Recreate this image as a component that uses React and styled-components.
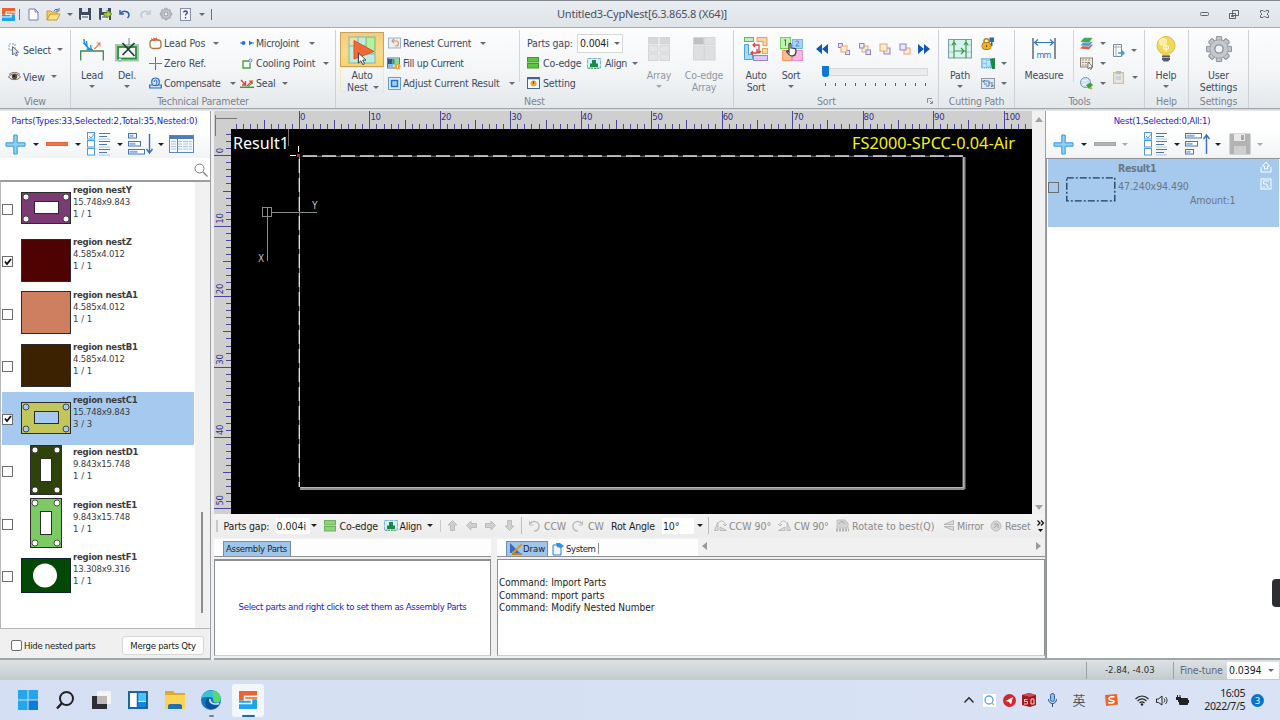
import React from 'react';
import styled, { createGlobalStyle, css } from 'styled-components';

const Global = createGlobalStyle`
  html, body { margin: 0; padding: 0; overflow: hidden; }
  body { font-family: 'DejaVu Sans Condensed', 'DejaVu Sans', 'Noto Sans CJK SC', sans-serif; font-stretch: condensed; font-size: 10.5px; color: #3f4a5e; }
  * { box-sizing: border-box; }
  svg { display: block; flex: none; overflow: visible; }
`;

const Window = styled.div`
  width: 1280px; height: 720px; display: flex; flex-direction: column; background: #f0f0f0; overflow: hidden;
`;

const Label = styled.span`
  display: block; flex: none; white-space: nowrap; line-height: 12px;
  width: ${p => (p.$w ? p.$w + 'px' : 'auto')};
  margin-left: ${p => p.$ml || 0}px;
  letter-spacing: ${p => (p.$ls === undefined ? -0.17 : p.$ls)}px;
  font-size: ${p => p.$size || 10.5}px;
  text-align: ${p => p.$align || 'left'};
  color: ${p => p.$color || 'inherit'};
  font-weight: ${p => (p.$bold ? 'bold' : 'normal')};
`;

const Cell = styled.div`
  flex: none; width: ${p => p.$w}px; height: 100%; margin-left: ${p => p.$ml || 0}px;
  display: flex; align-items: center; justify-content: center;
`;

const CaretShape = styled.i`
  flex: none; display: block; width: 0; height: 0; margin-left: ${p => p.$ml || 0}px;
  border: 3px solid transparent; border-top: 3px solid ${p => p.$c || '#666c75'}; border-bottom: 0;
`;

const Rule = styled.div`
  flex: none; width: 1px; height: ${p => p.$h}px; margin-left: ${p => p.$ml || 0}px; background: ${p => p.$c || '#b9bec4'};
`;

const Svg = ({ w, h, vb, children }) => (
  <svg width={w} height={h || w} viewBox={vb || `0 0 ${w} ${h || w}`} fill="none">{children}</svg>
);

/* ---------- icons ---------- */

const Logo = ({ s = 13 }) => (
  <Svg w={s} vb="0 0 18 18">
    <path d="M0 0h18v6H6v3.500h-6z" fill="#f0622a" />
    <path d="M6 6h12v3H6z" fill="#f08a5c" />
    <path d="M0 9.500h6V9h12v9H0z" fill="#1ea4ea" />
    <path d="M18 5.300H5.500V9h7v3.500H0" stroke="#fbfbfb" strokeWidth="1.500" />
  </Svg>
);
const NewFile = () => <Svg w={11} h={13}><path d="M1 1h6l3 3v8H1z" fill="#fff" stroke="#7c7bbd" /><path d="M7 1v3h3" stroke="#7c7bbd" /></Svg>;
const OpenFile = () => (
  <Svg w={15} h={13}>
    <path d="M1 12V3h4l1 1h5v2" fill="#f6cf62" stroke="#c59a2c" /><path d="M1 12l3-6h10l-3 6z" fill="#fbe08a" stroke="#c59a2c" />
    <path d="M8 3c1-2 3-2 4-1m1-2v3h-3" stroke="#3b6fb5" />
  </Svg>
);
const Floppy = ({ arrow }) => (
  <Svg w={12}>
    <path d="M0 0h12v12H1l-1-1z" fill="#414b60" /><path d="M3 0h6v4H3z" fill="#dfe4ec" /><path d="M2 7h8v5H2z" fill="#eef1f5" /><path d="M3 9h6" stroke="#414b60" />
    {arrow && <path d="M5 5h3V2l5 4-5 4V8H5z" fill="#a9d324" stroke="#62821a" strokeWidth=".7" />}
  </Svg>
);
const Undo = ({ c = '#2f5da8', flip }) => (
  <Svg w={12} h={10}><g transform={flip ? 'translate(12 0) scale(-1 1)' : ''}><path d="M1 1v4h4" stroke={c} strokeWidth="1.500" /><path d="M1.500 4.500C4 1 10 2 10 6c0 1-.5 2-1.500 3" stroke={c} strokeWidth="1.500" /></g></Svg>
);
const Gear = ({ s = 12, c = '#70757d', fill = '#c9ccd1' }) => (
  <Svg w={s} vb="0 0 24 24">
    <g fill={fill} stroke={c} strokeWidth="1">
      {[0, 45, 90, 135].map(a => <rect key={a} x="9.500" y="0.500" width="5" height="23" rx="1" transform={`rotate(${a} 12 12)`} />)}
    </g>
    <circle cx="12" cy="12" r="8.500" fill={fill} stroke={c} strokeWidth=".6" />
    <circle cx="12" cy="12" r="3.800" fill="#f3f4f6" stroke={c} strokeWidth="1.300" />
  </Svg>
);
const HelpBox = () => <Svg w={11} h={13}><rect x=".5" y=".5" width="10" height="12" fill="#f4f6fb" stroke="#8490ac" /><path d="M3.700 4.500c0-2 3.600-2 3.600 0 0 1.300-1.800 1.300-1.800 3M5.500 9v1.400" stroke="#2e4a85" strokeWidth="1.300" /></Svg>;

const SelectIco = () => <Svg w={12} h={14}><path d="M1 1h6v6H1z" stroke="#9aa3b0" strokeDasharray="2 1" /><path d="M4.500 3.500v8.500l2-2 1.500 3 1.500-.8L8.100 9.300h2.700z" fill="#dfe4ea" stroke="#5c6675" strokeWidth=".9" /></Svg>;
const Eye = () => <Svg w={13} h={9}><path d="M.5 5C3 1 10 1 12.500 5 10 8.500 3 8.500.5 5z" fill="#efe9e0" stroke="#6f6660" /><circle cx="6.500" cy="4.500" r="2.700" fill="#5b4a3e" /><circle cx="6" cy="4" r="1" fill="#1d1715" /><path d="M1 2.500C4-.3 9-.3 12 2.500" stroke="#7d756e" /></Svg>;
const LeadIco = () => (
  <Svg w={24} h={24}>
    <path d="M.7 23.500V14h22.600v9.500" stroke="#3b8c4a" strokeWidth="1.300" /><path d="M4 2c0 5 3 10 9 11" stroke="#1f8fd6" strokeWidth="1.500" /><path d="M3 6l4 2.500L6.500 4M6.500 12l5 1-1-5" stroke="#1f8fd6" strokeWidth="1.300" />
    <path d="M14 12c2-1 3-3 6-6m-3.500 0H20v3.500" stroke="#e5806c" strokeWidth="1.200" />
  </Svg>
);
const DelIco = () => (
  <Svg w={24} h={25}><rect x="1.500" y="8.500" width="21" height="14.500" stroke="#a9c9ae" strokeWidth="3" fill="#f2faf3" /><rect x="3" y="10" width="18" height="11.500" stroke="#2b8d3c" strokeWidth="1.800" /><path d="M14 1v7" stroke="#7e8690" /><path d="M7.500 6l12 13M19.500 6L7.500 18" stroke="#31373f" strokeWidth="1.700" /><circle cx="5" cy="22.500" r="1.500" fill="#fff" stroke="#5a9" /></Svg>
);
const LeadPos = () => <Svg w={13} h={12}><rect x="1" y="3" width="11" height="8.500" rx="3" stroke="#b07a36" strokeWidth="1.300" /><path d="M2 1.500l4 2.500M8 1L4.500 3.500M4 1l5 2" stroke="#e0524a" /></Svg>;
const ZeroRef = () => <Svg w={13}><path d="M6.500 0v4m0 5v4" stroke="#5f55c8" /><path d="M0 6.500h4m5 0h4" stroke="#8f5cc0" /><path d="M6.500 4v5M4 6.500h5" stroke="#e0524a" /></Svg>;
const Compensate = () => <Svg w={13} h={12}><path d="M.7 11V8h3C2 6 2 1 6.500 1s4.500 5 2.800 7h3v3z" fill="#cfe1f6" stroke="#2b6bc0" strokeWidth="1.200" /><path d="M4 8.500h5M5 5a1.500 2 0 013 0c0 1-1 2-1 3" stroke="#2b6bc0" /></Svg>;
const Micro = () => <Svg w={14} h={6}><path d="M0 3h5m4 0h5" stroke="#2f6fd0" strokeWidth="1.200" /><circle cx="3.500" cy="3" r="2" fill="#2f6fd0" /><path d="M9 .4l3.500 2.600L9 5.600z" fill="#2f6fd0" /></Svg>;
const Cooling = () => <Svg w={11} h={11}><path d="M7 3H1v7h7V5" stroke="#52a043" strokeWidth="1.400" /><circle cx="8.500" cy="2.500" r="1.500" stroke="#3f87cf" /></Svg>;
const SealIco = () => <Svg w={14} h={9}><path d="M0 8.300h14" stroke="#3f9a3b" strokeWidth="1.500" /><path d="M1 1l4.500 5V2M5.500 6H2" stroke="#d5483f" strokeWidth="1.400" /><path d="M7 7l5-5H9m3 0v3" stroke="#d5483f" strokeWidth="1.200" /><path d="M8 7.500l5-4" stroke="#3f9a3b" /></Svg>;
const Pointer = () => <path d="M10.500 17v10l2.400-2.200 1.800 3.800 1.800-.8-1.800-3.700H18z" fill="#fff" stroke="#222" strokeWidth=".8" />;
const AutoNest = () => (
  <Svg w={28} h={28}><rect x="1" y="1" width="26" height="26" fill="#c2ecdc" stroke="#7fb7b0" /><path d="M1 10h26M10 1v26M18 1v9M10 18h17" stroke="#74b6c6" /><rect x="18.500" y="1.500" width="8" height="16" fill="#b7f19e" stroke="#8fcf8a" /><rect x="2" y="2" width="7" height="7" fill="#e8e3a8" />
    <path d="M6 4.500l20 11L6 23z" fill="#ee6a3a" stroke="#dc5526" /><Pointer /></Svg>
);
const Renest = () => <Svg w={13} h={12}><rect x=".5" y="1" width="12" height="10" fill="#e9eef2" stroke="#9fb5c4" /><path d="M4 4h4a2 2 0 010 5H7M6 2L4 4l2 2" stroke="#e29465" strokeWidth="1.200" /></Svg>;
const FillUp = () => <Svg w={14} h={13}><rect x=".5" y="1" width="12" height="10" fill="#cfeaf5" stroke="#56789c" /><path d="M6 1.500h6V8H6z" fill="#8fd69a" /><path d="M1 2h4.500v5H1z" fill="#31598f" /><path d="M5.500 2h2v5h-2z" fill="#3f9e4a" /><path d="M1 7h5v4H1z" fill="#8bb7e8" /><circle cx="10.500" cy="9.500" r="3" fill="#f3a63a" /><path d="M10.500 8v3" stroke="#fff" /></Svg>;
const Adjust = () => <Svg w={13} h={13}><rect x=".5" y=".5" width="12" height="12" fill="#d6ecfb" stroke="#64a0cf" /><rect x="3.500" y="3.500" width="6" height="6" fill="#9fd0f5" stroke="#2470c4" strokeWidth="1.400" /></Svg>;
const Coedge = ({ soft }) => <Svg w={12} h={12}><rect x=".5" y=".5" width="11" height="4.500" fill={soft ? '#8fd27c' : '#5cc63c'} stroke={soft ? '#6db35c' : '#3b9b2a'} /><rect x=".5" y="6.500" width="11" height="4.500" fill={soft ? '#8fd27c' : '#5cc63c'} stroke={soft ? '#6db35c' : '#3b9b2a'} /></Svg>;
const AlignIco = () => <Svg w={14} h={11}><rect x=".5" y=".5" width="13" height="9.500" fill="#d9eefb" stroke="#79b4d4" strokeDasharray="4 1" /><path d="M5 2h4v3.500h2V9H3V5.500h2z" fill="#1c8a43" /><path d="M1 10.300h12" stroke="#4aa06a" strokeDasharray="2 1" /></Svg>;
const SettingIco = () => <Svg w={13} h={12}><rect x=".5" y=".5" width="12" height="11" fill="#f6f8fb" stroke="#3e6796" /><path d="M1 1.500h11" stroke="#3e6796" strokeWidth="1.500" /><circle cx="6.500" cy="6.500" r="3" fill="#eea63a" /><path d="M6.500 4v3" stroke="#7b4d0d" /></Svg>;
const Blocks = ({ n }) => (
  <Svg w={22} h={24}>
    {n === 3
      ? [0, 1, 2].map(r => [0, 1].map(c => <rect key={r + '' + c} x={.5 + c * 11.500} y={.5 + r * 8.200} width="9.500" height="6.500" fill={r ? '#d3d5d8' : '#b9bbbf'} stroke="#b4b7bb" />))
      : [0, 1].map(r => [0, 1].map(c => <rect key={r + '' + c} x={.5 + c * 11} y={.5 + r * 8.500} width="10.500" height={r ? 14 : 7} fill={r || c ? '#c9cbce' : '#8f9194'} stroke="#b8babd" />))}
  </Svg>
);
const AutoSort = () => (
  <Svg w={24} h={24}>
    <rect x=".5" y=".5" width="9" height="4" fill="#bdeec0" stroke="#5cb668" /><path d="M13 .5h10v8h-4v-4h-6z" fill="#fbd3a6" stroke="#eb9a56" /><path d="M.5 7.500h4v10h4v5h-8z" fill="#a6daf7" stroke="#4ba4de" />
    <rect x="18.500" y="11.500" width="5" height="5" fill="#fbe1a8" stroke="#e0ae42" /><rect x="9.500" y="18.500" width="14" height="5" fill="#dcc9f5" stroke="#a17fd6" />
    <path d="M9 8h6v8M13 14l2 2 2-2M11 6L9 8l2 2M7 16h6V12M9 14l-2 2 2 2" stroke="#e04444" strokeWidth="1.300" />
  </Svg>
);
const SortIco = () => (
  <Svg w={23} h={24}>
    <rect x=".5" y=".5" width="10" height="11" fill="#c2f2b2" stroke="#76cf65" /><rect x="12.500" y="2.500" width="10" height="9" fill="#a9d2fa" stroke="#7ab5ee" /><rect x="2.500" y="13.500" width="9" height="10" fill="#fbbd94" stroke="#f09b66" /><rect x="12.500" y="13.500" width="10" height="10" fill="#f7b7e3" stroke="#e793cb" />
    <path d="M4 3.500l1.500-1V9" stroke="#3e8d36" /><path d="M15.500 5c1-2 4-1 3 1l-3 3h4" stroke="#4d86cc" />
    <path d="M9 15V7.500c0-1.500 2-1.500 2 0V11c4 0 5 .5 5 3 0 3-1 5-4 5-2.500 0-3.500-1.500-5.500-4.500 0-1 1.500-1 2.500.5z" fill="#fff" stroke="#333" strokeWidth="1.200" />
  </Svg>
);
const Dbl = ({ flip }) => <Svg w={12} h={10}><path transform={flip ? 'translate(12 0) scale(-1 1)' : ''} d="M6 0v10L0 5zM12 0v10L6 5z" fill="#1458b5" /></Svg>;
const Order = ({ k }) => {
  const a = '#f0a45c', b = '#8f82c9';
  const sq = (x, y, s, c) => <rect key={x + c} x={x} y={y} width={s} height={s} stroke={c} fill={c === a ? '#fdf0dc' : '#ece8f9'} />;
  return <Svg w={12} h={12}>{[
    [sq(.5, .5, 4, b), sq(7.5, 7.5, 4, b), sq(3, 3, 6, a)],
    [sq(3, 3, 6, a), sq(.5, .5, 4.500, b), sq(7, 7, 4.500, b)],
    [sq(5, 5, 6, b), sq(1, 1, 7, a)],
    [sq(5, 5, 6, a), sq(1, 1, 6, b)],
  ][k]}</Svg>;
};
const PathIco = () => <Svg w={24} h={20}><rect x=".5" y=".5" width="23" height="18.500" fill="#d6f2ec" stroke="#7c9aa0" /><path d="M1 6h5m12 0h5M1 13h5m12 0h5" stroke="#a9c6c8" /><path d="M6 1v18M18 1v18M6 12h12m-5-3 3 3-3 3M4 6l2-3 2 3m8 0 2-3 2 3" stroke="#3d9a4b" strokeWidth="1.200" /></Svg>;
const LockIco = () => <Svg w={14} h={13}><path d="M3 6V4c0-3 5-3 5 0v2" stroke="#b98415" strokeWidth="1.500" /><rect x="1" y="5.500" width="9" height="7" rx="3" fill="#f0b02a" stroke="#b77e0e" /><path d="M5.500 8v2" stroke="#6c4700" /><path d="M8.500.500h4.500V5h-1.500v4H10V5H8.500z" fill="#2b6bb4" /></Svg>;
const GreenBox = () => <Svg w={14} h={11}><rect x=".5" y=".5" width="12" height="9.500" fill="#8ecdf0" stroke="#7599b4" strokeDasharray="1 1" /><path d="M2 2h3v3H2zM2 6h3v3H2zM6 3h3v5H6z" fill="#bde4f8" /><path d="M9 1l5-1v11h-3z" fill="#1b8a3e" /></Svg>;
const Swap = () => <Svg w={14} h={11}><rect x=".5" y=".5" width="13" height="10" fill="#dfe9f3" stroke="#8f979f" /><path d="M2 4l2-2m-2 0v2h2M12 7l-2 2m2 0V7h-2M4 3h4v5H5M3 6h3m2-1h4" stroke="#4f7fb6" /></Svg>;
const MeasureIco = () => <Svg w={24} h={22}><path d="M1 0v21M23 0v21" stroke="#4b5462" strokeWidth="1.300" /><path d="M2 4.500h20M6 1.500L2.500 4.500 6 7.500m12-6 3.500 3L18 7.500" stroke="#2f78cc" strokeWidth="1.200" /><text x="12" y="19.500" fontSize="9" textAnchor="middle" textLength="15" fill="#2f78cc" fontFamily="DejaVu Sans Condensed, sans-serif">mm</text></Svg>;
const Layers = () => <Svg w={13} h={13}><path d="M0 11.500l4-4h9l-4 5z" fill="#d9604c" /><path d="M0 8.500l4-4h9l-4 5z" fill="#4f97d7" stroke="#fff" strokeWidth=".5" /><path d="M0 5l4-4.500h9L9 6z" fill="#3fa860" stroke="#fff" strokeWidth=".5" /></Svg>;
const Table2 = () => <Svg w={14} h={13}><rect x=".5" y="1" width="12" height="9" fill="#efe8d8" stroke="#8a8478" /><path d="M2 3h9M2 5.500h9M2 8h5" stroke="#9c9585" strokeDasharray="2 1" /><path d="M8 5v7l1.500-1.500 1 2 1.200-.5-1-2h2z" fill="#fff" stroke="#4a4a4a" strokeWidth=".7" /></Svg>;
const Globe = () => <Svg w={13} h={13}><circle cx="5.500" cy="5.500" r="5" fill="#cbe3f2" stroke="#6b98b7" /><path d="M2 3c3 2 5 0 6-1M2 8c3-2 5 0 7-1" stroke="#fff" /><path d="M6 8l4.500-2.500L13 8l-4 4z" fill="#3f9f43" /><path d="M10 10.500l2 1.500" stroke="#d0a23a" strokeWidth="2" /></Svg>;
const ExportIco = () => <Svg w={12} h={14}><path d="M.5.500h8v12h-8z" fill="#fff" stroke="#7b8794" /><path d="M3 0v13M.5 3h8" stroke="#a0abb6" /><path d="M5 9h6m-2.500-2.500L11 9l-2.500 2.500" stroke="#37a3dc" strokeWidth="1.500" /></Svg>;
const Clip = () => <Svg w={11} h={13}><rect x=".5" y="1.500" width="10" height="11" fill="#eadfc4" stroke="#cdbf9f" /><path d="M3 0h5v3H3z" fill="#b7bcc3" /><rect x="2.500" y="4" width="6" height="7" fill="#dfe8f3" /><path d="M3 6h5M3 8h5" stroke="#aebed2" /></Svg>;
const Bulb = () => <Svg w={20} h={26}><circle cx="10" cy="9.500" r="9" fill="#f2d858" stroke="#dcbc3f" /><circle cx="7" cy="6" r="4" fill="#fbf0ab" /><path d="M5.500 16h9l-1.500 4H7z" fill="#ecd15a" /><path d="M7.500 10h5v3h-5zM10 9v7" stroke="#fffbe0" /><path d="M6 19.500h8v4l-2 2H8l-2-2z" fill="#525a66" /><path d="M6 21.500h8" stroke="#a6adb7" /></Svg>;
const Launcher = () => <Svg w={6} h={6}><path d="M.5 5V.5H5" stroke="#888f98" /><path d="M2.500 2.500L5 5M5.500 3v2.500H3" stroke="#888f98" /></Svg>;

const Plus = () => <Svg w={21} h={21}><path d="M8.800 1h3.400v7.800H20v3.400h-7.800V20H8.800v-7.800H1V8.800h7.800z" fill="#8ed0f6" stroke="#3e95d9" /></Svg>;
const Minus = ({ c = '#f0744a', s = '#e8623a' }) => <Svg w={22} h={4}><rect x=".5" y=".5" width="21" height="3" fill={c} stroke={s} /></Svg>;
const Checks = () => (
  <Svg w={24} h={24}>
    {[.5, 8.500, 16.500].map(y => <rect key={y} x=".5" y={y} width="7" height="6.500" fill="#fff" stroke="#4e9ada" />)}
    <path d="M2 4l2 2 4-5" stroke="#4e9ada" />
    {[1.500, 4.500, 9.500, 12.500, 17.500, 20.500].map((y, i) => <path key={y} d={`M12 ${y}h${i % 2 ? 8 : 11}`} stroke="#4f77a8" />)}
    {[7, 15, 23].map(y => <path key={y} d={`M12 ${y}h11`} stroke="#b5c6da" />)}
  </Svg>
);
const SortList = ({ up }) => (
  <Svg w={25} h={23}>
    {(up ? [16, 12, 8] : [8, 12, 16]).map((w, i) => <g key={i}><rect x=".5" y={.5 + i * 8} width={w} height="4.500" fill="#fff" stroke="#4573b8" /><path d={`M1.500 ${2.8 + i * 8}h${w / 2}`} stroke="#86aede" strokeWidth="2" /></g>)}
    {up ? <path d="M21.500 21V2m-3 4 3-4 3 4" stroke="#3e6fb6" strokeWidth="1.400" /> : <path d="M21.500 1v19m-3-4 3 4 3-4" stroke="#3e6fb6" strokeWidth="1.400" />}
  </Svg>
);
const Grid = () => <Svg w={25} h={18}><rect x=".5" y=".5" width="24" height="17" fill="#f7fafd" stroke="#5b86bf" /><path d="M1 2.500h23" stroke="#4e7cba" strokeWidth="3" /><path d="M2 6.500h21M2 9h21M2 11.500h21M2 14h21" stroke="#a9c2e0" strokeDasharray="5 1" /><path d="M8.500 4v13" stroke="#5b86bf" /></Svg>;
const BigFloppy = () => <Svg w={22} h={22}><path d="M.5.500h21v21H.5z" fill="#b3b3b3" /><path d="M5 1h11v7H5z" fill="#e9e9e9" /><path d="M5 13h12v8H5z" fill="#cfcfcf" /><path d="M12 2h3v5h-3z" fill="#a8a8a8" /></Svg>;
const Mag = () => <Svg w={14} h={14}><circle cx="5.500" cy="5.500" r="4.500" stroke="#7b7b7b" /><path d="M9 9l4.500 4.500" stroke="#7b7b7b" strokeWidth="1.200" /></Svg>;

/* ---------- title bar ---------- */

const TitleBar = styled.header`
  flex: none; height: 28px; border-top: 1px solid #85898f; border-bottom: 1px solid #a8adb2;
  background: linear-gradient(#e9edf1, #dfe4e8); display: flex; align-items: center; padding-bottom: 0;
`;
const TitleText = styled.h1`
  margin: 0 0 0 345px; width: 168px; font: normal 11px/14px 'Noto Sans', sans-serif; letter-spacing: -0.2px; color: #4a5060; white-space: nowrap; text-align: left;
`;

function Title() {
  return (
    <TitleBar>
      <Cell $w={16}><Logo /></Cell>
      <Rule $h={11} $ml={3} $c="#6d7278" />
      <Cell $w={20} $ml={3}><NewFile /></Cell>
      <Cell $w={20}><OpenFile /></Cell>
      <Cell $w={14}><CaretShape /></Cell>
      <Cell $w={16}><Floppy /></Cell>
      <Cell $w={24}><Floppy arrow /></Cell>
      <Cell $w={16}><Undo /></Cell>
      <Cell $w={24}><Undo flip c="#c3c9d1" /></Cell>
      <Cell $w={17}><Gear /></Cell>
      <Cell $w={22}><HelpBox /></Cell>
      <Cell $w={11}><CaretShape /></Cell>
      <Rule $h={11} $ml={4} $c="#6d7278" />
      <TitleText>Untitled3-CypNest[6.3.865.8 (X64)]</TitleText>
      <Cell $w={20} $ml={469}><Svg w={9} h={4}><rect x=".5" y=".5" width="8" height="3" rx="1" stroke="#5d646c" /></Svg></Cell>
      <Cell $w={20} $ml={10}><Svg w={10} h={9}><path d="M3.500.500h6v5h-6zM.5 3.500h6v5h-6z" fill="#e4e8ec" stroke="#5d646c" /><path d="M2.500 5.500h2v1h-2z" stroke="#5d646c" /></Svg></Cell>
      <Cell $w={20} $ml={10}><Svg w={9} h={8}><path d="M.5.500h2.500l1.500 1.500L6 .5h2.500v2L7 4l1.500 1.500v2H6L4.500 6 3 7.500H.5v-2L2 4 .5 2.500z" stroke="#5d646c" /></Svg></Cell>
    </TitleBar>
  );
}

/* ---------- ribbon ---------- */

const RibbonBar = styled.div`
  flex: none; height: 81px; display: flex; background: linear-gradient(#fdfdfe, #f3f5f7 55%, #e4e8eb); border-bottom: 1px solid #a2a8ad;
`;
const GroupBox = styled.section`
  flex: none; width: ${p => p.$w}px; height: 78px; margin-top: 2px; display: flex; flex-direction: column; border-right: 1px solid #cdd1d6;
`;
const GroupBody = styled.div`flex: none; height: 64px; display: flex; align-items: flex-start;`;
const GroupFoot = styled.div`
  flex: 1; display: flex; align-items: center; justify-content: ${p => (p.$pl ? 'flex-start' : 'center')}; color: #7c8390; padding-left: ${p => p.$pl || 0}px;
`;
const Stack = styled.div`
  flex: none; width: ${p => p.$w}px; margin-left: ${p => p.$ml || 0}px; padding-top: ${p => p.$pt === undefined ? 3 : p.$pt}px; display: flex; flex-direction: column;
`;
const Line = styled.div`flex: none; height: ${p => p.$h || 20}px; display: flex; align-items: center;`;
const IconBox = styled.span`flex: none; width: ${p => p.$w || 14}px; display: flex; justify-content: center;`;
const Big = styled.div`
  flex: none; width: ${p => p.$w}px; margin-left: ${p => p.$ml || 0}px; display: flex; flex-direction: column; align-items: center; text-align: center; opacity: ${p => (p.$off ? .55 : 1)};
`;
const BigPic = styled.div`
  width: 100%; height: 37px; padding-top: 1px; display: flex; align-items: center; justify-content: center;
  ${p => p.$hot && css`height: 35px; margin-top: 2px; padding: 0; background: linear-gradient(#f4cd7c, #f9d98c 60%, #fbd367); border: 1px solid #c9a35a;`}
`;
const BigText = styled.div`
  width: 100%; padding-top: 2px; height: 25px; display: flex; flex-direction: column; align-items: center; ${p => p.$hot && css`box-shadow: inset 0 0 0 1px #f0eab9;`}
`;
const Split = styled.div`display: flex; align-items: center; height: 12px; padding-left: 2px;`;

const Combo = styled.div`
  flex: none; display: flex; align-items: center; width: ${p => p.$w}px; height: ${p => p.$h || 19}px; margin-left: ${p => p.$ml || 0}px; padding-left: ${p => p.$pl === undefined ? 2 : p.$pl}px; background: #fff; color: #1c1c1c;
  border: ${p => (p.$line ? '1px solid #d5d8dc' : '0')};
`;

const Row = ({ icon, iw, text, w, ls, caret, gap = 2 }) => (
  <Line>
    <IconBox $w={iw}>{icon}</IconBox>
    <Label $ml={gap} $w={w} $ls={ls}>{text}</Label>
    {caret && <CaretShape $ml={caret} />}
  </Line>
);
const BigButton = ({ icon, a, b, w, ml, drop, off, hot, ls, dropInline }) => (
  <Big $w={w} $ml={ml} $off={off}>
    <BigPic $hot={hot}>{icon}</BigPic>
    <BigText $hot={hot}>
      <Label $ls={ls}>{a}</Label>
      {dropInline ? <Split><Label $ls={ls}>{b}</Label><CaretShape $ml={5} /></Split> : b && <Label $ls={ls}>{b}</Label>}
      {drop && <Split><CaretShape $ml={-2} /></Split>}
    </BigText>
  </Big>
);
const Group = ({ w, name, pl, ls, children, foot }) => (
  <GroupBox $w={w}><GroupBody>{children}</GroupBody><GroupFoot $pl={pl}><Label $ls={ls}>{name}</Label>{foot}</GroupFoot></GroupBox>
);
const SliderBox = styled.div`display: flex; flex-direction: column; padding: 6px 0 0 0;`;
const SliderTrack = styled.div`height: 8px; width: 106px; background: #e9ebec; border: 1px solid #d5d8db; display: flex; align-items: center;`;
const SliderThumb = styled.i`display: block; width: 7px; height: 11px; background: #0f78d4; border-radius: 0 0 3px 3px; margin-left: -1px; flex: none;`;
const Ticks = styled.div`display: flex; justify-content: space-between; padding: 5px 2px 0 3px; width: 106px;`;
const Tick = styled.i`width: 1px; height: 3px; background: #555b63;`;
const FootEnd = styled.span`margin-left: 91px;`;

function Ribbon() {
  return (
    <RibbonBar>
      <Group w={71} name="View">
        <Stack $w={70} $ml={7} $pt={6}>
          <Line $h={27}><IconBox><SelectIco /></IconBox><Label $ml={2} $w={31}>Select</Label><CaretShape $ml={3} /></Line>
          <Line $h={27}><IconBox><Eye /></IconBox><Label $ml={2} $w={25}>View</Label><CaretShape $ml={3} /></Line>
        </Stack>
      </Group>
      <Group w={265} name="Technical Parameter" ls={-0.2}>
        <BigButton w={38} ml={2} icon={<LeadIco />} a="Lead" drop />
        <BigButton w={30} ml={1} icon={<DelIco />} a="Del." drop />
        <Stack $w={90} $ml={6}>
          <Row icon={<LeadPos />} text="Lead Pos" w={44} caret={5} ls={-0.05} />
          <Row icon={<ZeroRef />} text="Zero Ref." w={45} ls={0} />
          <Row icon={<Compensate />} text="Compensate" w={59} caret={7} ls={-0.3} />
        </Stack>
        <Stack $w={92} $ml={2}>
          <Row icon={<Micro />} text="MicroJoint" w={48} caret={5} ls={-0.3} />
          <Row icon={<Cooling />} text="Cooling Point" w={62} caret={5} ls={-0.2} />
          <Row icon={<SealIco />} text="Seal" w={21} caret={5} />
        </Stack>
      </Group>
      <Group w={398} name="Nest" >
        <BigButton w={44} ml={4} hot icon={<AutoNest />} a="Auto" b="Nest" dropInline />
        <Stack $w={132} $ml={3}>
          <Row icon={<Renest />} text="Renest Current" w={72} caret={5} />
          <Row icon={<FillUp />} text="Fill up Current" w={72} ls={-0.35} />
          <Row icon={<Adjust />} text="Adjust Current Result" w={101} caret={5} />
        </Stack>
        <Rule $h={52} $ml={0} $c="#d3d7db" />
        <Stack $w={120} $ml={7}>
          <Line><Label $w={48}>Parts gap:</Label><Combo $w={46} $ml={2} $line><Label $w={30}>0.004i</Label><CaretShape $ml={4} /></Combo></Line>
          <Line><Coedge /><Label $ml={4} $w={39}>Co-edge</Label><IconBox $w={23}><AlignIco /></IconBox><Label $w={24} $ls={-0.35}>Align</Label><CaretShape $ml={3} /></Line>
          <Line><SettingIco /><Label $ml={3}>Setting</Label></Line>
        </Stack>
        <BigButton w={44} ml={-10} off icon={<Blocks n={3} />} a="Array" drop />
        <BigButton w={46} ml={0} off icon={<Blocks n={2} />} a="Co-edge" b="Array" />
      </Group>
      <Group w={205} name="Sort" pl={83} foot={<FootEnd><Launcher /></FootEnd>}>
        <BigButton w={40} ml={2} icon={<AutoSort />} a="Auto" b="Sort" />
        <BigButton w={34} ml={-2} icon={<SortIco />} a="Sort" drop />
        <Stack $w={118} $ml={8} $pt={9}>
          <Line>
            <Dbl /><Cell $w={22} $ml={5}><Order k={0} /></Cell><Cell $w={20}><Order k={1} /></Cell><Cell $w={20}><Order k={2} /></Cell><Cell $w={20}><Order k={3} /></Cell><Cell $w={18}><Dbl flip /></Cell>
          </Line>
          <SliderBox><Line $h={13}><Cell $w={6} /><SliderTrack><SliderThumb /></SliderTrack></Line><Line $h={7}><Cell $w={6} /><Ticks>{Array.from({ length: 11 }, (_, i) => <Tick key={i} />)}</Ticks></Line></SliderBox>
        </Stack>
      </Group>
      <Group w={76} name="Cutting Path" ls={-0.25}>
        <BigButton w={40} ml={1} icon={<PathIco />} a="Path" drop />
        <Stack $w={34} $ml={1}>
          <Line><LockIco /></Line>
          <Line><GreenBox /><CaretShape $ml={6} /></Line>
          <Line><Swap /><CaretShape $ml={6} /></Line>
        </Stack>
      </Group>
      <Group w={130} name="Tools">
        <BigButton w={56} ml={1} icon={<MeasureIco />} a="Measure" />
        <Rule $h={52} $ml={1} $c="#d3d7db" />
        <Stack $w={28} $ml={6}>
          <Line><Layers /><CaretShape $ml={7} /></Line>
          <Line><Table2 /><CaretShape $ml={6} /></Line>
          <Line><Globe /><CaretShape $ml={7} /></Line>
        </Stack>
        <Stack $w={28} $ml={5} $pt={7}>
          <Line $h={27}><ExportIco /><CaretShape $ml={6} /></Line>
          <Line $h={27}><Clip /><CaretShape $ml={8} /></Line>
        </Stack>
      </Group>
      <Group w={44} name="Help"><BigButton w={42} icon={<Bulb />} a="Help" drop /></Group>
      <Group w={60} name="Settings"><BigButton w={59} icon={<Gear s={26} c="#8d929a" fill="#c5c8cd" />} a="User" b="Settings" /></Group>
    </RibbonBar>
  );
}

/* ---------- parts panel ---------- */

const Main = styled.main`
  flex: none; height: 551px; padding-top: 2px; display: flex; background: linear-gradient(#c9d0d4, #f0f0f0 2px);
`;
const Side = styled.aside`
  flex: none; width: ${p => p.$w}px; display: flex; flex-direction: column; background: #fff; border-bottom: 2px solid #a0a5a8;
`;
const SideTitle = styled.div`
  flex: none; height: 19px; display: flex; align-items: center; justify-content: center; color: #2418cc; padding-right: ${p => p.$pr || 0}px;
`;
const SideTools = styled.div`
  flex: none; height: 28px; display: flex; align-items: center; background: linear-gradient(#fff, #f1f3f5); padding-left: 3px;
`;
const SearchRow = styled.div`flex: none; height: 22px; display: flex; align-items: center; justify-content: flex-end; padding: 2px 2px 0 0;`;
const ListBox = styled.div`flex: none; height: 449px; display: flex; border-top: 2px solid #9a9da0; border-left: 1px solid #b5b8bb; border-bottom: 1px solid #b5b8bb;`;
const Items = styled.div`flex: none; width: 194px; padding-left: 1px;`;
const PartRow = styled.div`
  height: 52.5px; width: 192px; display: flex; background: ${p => (p.$on ? '#a6caef' : 'transparent')};
`;
const BoxShape = styled.span`
  flex: none; display: flex; align-items: center; justify-content: center; width: 11px; height: 11px; border: 1px solid #6d6d6d; background: ${p => (p.$clear ? 'transparent' : '#fff')};
  margin-top: ${p => p.$mt || 0}px; border-radius: ${p => p.$r || 0}px;
`;
const Thumb = styled.div`flex: none; width: 50px; height: 51px; margin-left: 8px; display: flex; align-items: center; justify-content: center;`;
const PartText = styled.div`padding: 1.5px 0 0 2px; color: #3c3c3c;`;
const Track = styled.div`flex: 1; background: #f1f1f1; display: flex; justify-content: center; padding: 330px 2px 0 0;`;
const ThumbBar = styled.i`width: 2px; height: 101px; background: #8d8d8d;`;
const SideFoot = styled.div`flex: none; height: 29px; background: #f0f0f0; display: flex; align-items: center; padding: 4px 0 0 11px; color: #222;`;
const Button = styled.button`
  width: 82px; height: 19px; margin-left: 26px; padding: 0; border: 1px solid #d8d8d8; border-radius: 3px; background: #fdfdfd; font: inherit; font-size: 9.5px; color: #222; letter-spacing: -0.25px; white-space: nowrap;
`;

const Check = ({ on, ...p }) => <BoxShape {...p}>{on && <Svg w={8} h={8}><path d="M1 3.500l2 2.500L7 1" stroke="#111" strokeWidth="1.800" /></Svg>}</BoxShape>;

const Wide = ({ c, hole }) => (
  <Svg w={50} h={32}><rect x=".5" y=".5" width="49" height="31" fill={c} stroke="#2b2b2b" /><rect x="13.500" y="9.500" width="24" height="12" fill={hole} stroke="#2b2b2b" />
    {[[5, 5], [45, 5], [5, 27], [45, 27]].map(([x, y]) => <circle key={x + '-' + y} cx={x} cy={y} r="3" fill={hole} stroke="#2b2b2b" strokeWidth=".8" />)}</Svg>
);
const Tall = ({ c }) => (
  <Svg w={32} h={50}><rect x=".5" y=".5" width="31" height="49" fill={c} stroke="#2b2b2b" /><rect x="10.500" y="13.500" width="11" height="23" fill="#fff" stroke="#2b2b2b" />
    {[[5, 5], [27, 5], [5, 45], [27, 45]].map(([x, y]) => <circle key={x + '-' + y} cx={x} cy={y} r="3" fill="#fff" stroke="#2b2b2b" strokeWidth=".8" />)}</Svg>
);
const Solid = ({ c }) => <Svg w={50} h={43}><rect x=".5" y=".5" width="49" height="42" fill={c} stroke="#2b2b2b" /></Svg>;
const Disc = ({ c }) => <Svg w={50} h={35}><rect x=".5" y=".5" width="49" height="34" fill={c} stroke="#123" /><circle cx="24" cy="17.500" r="12" fill="#fff" /></Svg>;

const parts = [
  ['region nestY', '15.748x9.843', '1 / 1', <Wide c="#7c3a74" hole="#fff" />],
  ['region nestZ', '4.585x4.012', '1 / 1', <Solid c="#4f0202" />, true],
  ['region nestA1', '4.585x4.012', '1 / 1', <Solid c="#cd7f60" />],
  ['region nestB1', '4.585x4.012', '1 / 1', <Solid c="#3d2200" />],
  ['region nestC1', '15.748x9.843', '3 / 3', <Wide c="#c3c658" hole="#a6caef" />, true, true],
  ['region nestD1', '9.843x15.748', '1 / 1', <Tall c="#2f4209" />],
  ['region nestE1', '9.843x15.748', '1 / 1', <Tall c="#7ccb62" />],
  ['region nestF1', '13.308x9.316', '1 / 1', <Disc c="#034805" />],
];

function PartsPanel() {
  return (
    <Side $w={210}>
      <SideTitle $pr={1}><Label $size={9.5} $ls={-0.12}>Parts(Types:33,Selected:2,Total:35,Nested:0)</Label></SideTitle>
      <SideTools>
        <Cell $w={24}><Plus /></Cell><Cell $w={18}><CaretShape $c="#222" /></Cell>
        <Cell $w={24}><Minus /></Cell><Cell $w={17}><CaretShape $c="#222" /></Cell>
        <Cell $w={26}><Checks /></Cell><Cell $w={15}><CaretShape $c="#222" /></Cell>
        <Cell $w={26}><SortList /></Cell><Cell $w={15}><CaretShape $c="#222" /></Cell>
        <Cell $w={27}><Grid /></Cell>
      </SideTools>
      <SearchRow><Mag /></SearchRow>
      <ListBox>
        <Items>
          {parts.map(([name, size, qty, pic, on, sel]) => (
            <PartRow key={name} $on={sel}>
              <Check on={on} $mt={21.5} />
              <Thumb>{pic}</Thumb>
              <PartText><Label $bold $size={9.5} $ls={-0.22}>{name}</Label><Label $size={9.5} $ls={-0.2}>{size}</Label><Label $size={9.5} $ls={0}>{qty}</Label></PartText>
            </PartRow>
          ))}
        </Items>
        <Track><ThumbBar /></Track>
      </ListBox>
      <SideFoot><BoxShape $r={2} /><Label $ml={2} $w={72} $size={9.5} $ls={-0.28}>Hide nested parts</Label><Button>Merge parts Qty</Button></SideFoot>
    </Side>
  );
}

/* ---------- drawing area ---------- */

const Center = styled.section`flex: none; width: 831px; display: flex; flex-direction: column; background: #f0f0f0; border-bottom: 2px solid #a0a5a8;`;
const Gutter = styled.div`flex: none; width: ${p => p.$w}px; background: ${p => p.$c || '#f0f0f0'}; border-left: ${p => p.$b || 0}px solid #9da1a5;`;
const View = styled.div`flex: none; height: 403px; display: flex;`;
const VScroll = styled.div`flex: 1; background: #f1f1f1; display: flex; flex-direction: column; justify-content: space-between; align-items: center; padding: 6px 0 4px;`;

const U = 7.045;
function Drawing() {
  const X0 = 85.000, Y0 = 44.300;
  const top = [], left = [];
  for (let i = -9; i <= 103; i++) {
    const x = Math.round(X0 + i * U) + .5;
    if (x < 18) continue;
    top.push(<path key={i} d={`M${x} ${i % 10 === 0 ? 0 : i % 5 === 0 ? 9 : 13}V18`} />);
  }
  for (let i = -3; i <= 50; i++) {
    const y = Math.round(Y0 + i * U) + .5;
    left.push(<path key={i} d={`M${i % 10 === 0 ? 0 : i % 5 === 0 ? 9 : 12} ${y}H17`} />);
  }
  return (
    <svg width="818" height="403" viewBox="0 0 818 403" fill="none" fontFamily="DejaVu Sans Condensed, DejaVu Sans, sans-serif">
      <rect width="818" height="403" fill="#cfcfcf" />
      <rect x="17" y="18" width="801" height="385" fill="#000" />
      <g stroke="#4a479a">{top}{left}</g>
      <path d="M1.500 4v21M1 7.500h22" stroke="#777" />
      <g fill="#34318c" fontSize="9.500" letterSpacing="-0.3">
        {[0, 10, 20, 30, 40, 50, 60, 70, 80, 90, 100].map(n => <text key={n} x={X0 + 1 + n * U} y="8.500">{n}</text>)}
        {[0, 10, 20, 30, 40, 50].map(n => <text key={n} transform={`translate(8.500 ${Y0 - 2 + n * U}) rotate(-90)`}>{n}</text>)}
      </g>
      <text x="19" y="38" fontSize="16" fill="#fff" fontFamily="Noto Sans, sans-serif" textLength="56" lengthAdjust="spacingAndGlyphs">Result1</text>
      <text x="638" y="38" fontSize="16" fill="#f2f216" fontFamily="Noto Sans, sans-serif" textLength="163" lengthAdjust="spacingAndGlyphs">FS2000-SPCC-0.04-Air</text>
      <path d="M86 377.500h664.500M750 46v332" stroke="#8f8f8f" strokeWidth="3" />
      <path d="M86 376.500h663.500V46" stroke="#b5b5b5" />
      <path d="M85.500 45v331" stroke="#8f8f8f" />
      <path d="M88 45.300h661" stroke="#777" />
      <path d="M89 45h660" stroke="#ddd" strokeWidth="1.500" strokeDasharray="14 5" />
      <path d="M85.300 48v328" stroke="#e2e2e2" strokeWidth="1.300" strokeDasharray="14 5" />
      <path d="M74.500 18v17" stroke="#7b6b60" />
      <path d="M76 44.500h6M84.500 35v6" stroke="#fff" /><rect x="83" y="43" width="3" height="3" fill="#b5274e" />
      <g stroke="#8b8b8b"><rect x="48.500" y="96.500" width="9" height="9" /><path d="M53.500 97v53M58 101.500h45" /></g>
      <g fill="#c2c2c2" fontSize="10"><text x="98" y="98">Y</text><text x="44" y="151">X</text></g>
    </svg>
  );
}

const ToolStrip = styled.div`flex: none; height: 23px; display: flex; align-items: center; color: #1f1f1f; background: linear-gradient(#f4f4f4, #ececec);`;
const Grip = styled.i`width: 2px; height: 12px; background: #c9c9c9; margin-left: ${p => p.$ml}px;`;
const ArrowIco = ({ r }) => <Svg w={11} h={11}><path transform={`rotate(${r} 5.500 5.500)`} d="M5.500 0.500L10 5H7.500v5.500h-4V5H1z" fill="#cfcfcf" stroke="#bdbdbd" /></Svg>;
const Spin = ({ flip }) => <Svg w={12} h={12}><g transform={flip ? 'translate(12 0) scale(-1 1)' : ''} stroke="#bcbcbc" strokeWidth="1.500"><path d="M2 4c2-4 9-3 9 2 0 3-2 5-5 5" /><path d="M1.500 1v4h4" strokeWidth="1" /></g></Svg>;
const Turn = ({ flip }) => <Svg w={13} h={11}><g transform={flip ? 'translate(13 0) scale(-1 1)' : ''} stroke="#bbb"><path d="M.5 10.500L4 2v8.500zM6 10.500h6.500L6 7z" fill="#dedede" /><path d="M5 2c3-2 6-1 6 3m-2-1 2 2 2-2" /></g></Svg>;
const Best = () => <Svg w={13} h={13}><path d="M1 1h8l3 3v5H1z" fill="#d3d3d3" stroke="#c2c2c2" /><path d="M3 5c1-3 5-3 6 0" stroke="#aaa" /><path d="M0 11h13" stroke="#b3b3b3" strokeWidth="3" strokeDasharray="2 1" /></Svg>;
const MirrorIco = () => <Svg w={11} h={11}><path d="M10.500.500v4L1 4.500zM10.500 10.500v-4L1 6.500z" fill="#dedede" stroke="#b5b5b5" /></Svg>;
const ResetIco = () => <Svg w={13} h={12}><circle cx="6" cy="6" r="5" fill="#d5d5d5" stroke="#c0c0c0" /><path d="M4 4h4v4M8 4L4 8" stroke="#aaa" /></Svg>;

function BottomTools() {
  const g = '#8b8b8b';
  return (
    <ToolStrip>
      <Grip $ml={2} />
      <Label $ml={6} $w={50}>Parts gap:</Label>
      <Combo $w={34} $ml={2} $h={16} $pl={1}><Label $ls={0}>0.004i</Label></Combo>
      <CaretShape $ml={1} $c="#222" />
      <Cell $w={14} $ml={6}><Coedge soft /></Cell>
      <Label $ml={3} $w={41}>Co-edge</Label>
      <Cell $w={18} $ml={1}><AlignIco /></Cell>
      <Label $ml={0} $w={24} $ls={-0.3}>Align</Label>
      <CaretShape $ml={3} $c="#222" />
      <Grip $ml={7} />
      <Cell $w={19} $ml={2}><ArrowIco r={0} /></Cell><Cell $w={19}><ArrowIco r={-90} /></Cell><Cell $w={19}><ArrowIco r={90} /></Cell><Cell $w={19}><ArrowIco r={180} /></Cell>
      <Rule $h={17} $ml={2} />
      <Cell $w={18} $ml={3}><Spin /></Cell><Label $w={26} $ml={1} $color={g}>CCW</Label>
      <Cell $w={14} $ml={1}><Spin flip /></Cell><Label $w={20} $ml={3} $color={g}>CW</Label>
      <Label $ml={3} $w={48}>Rot Angle</Label>
      <Combo $w={32} $ml={3} $h={16} $pl={1}><Label>10°</Label></Combo>
      <CaretShape $ml={3} $c="#222" />
      <Rule $h={17} $ml={5} />
      <Cell $w={14} $ml={4}><Turn /></Cell><Label $w={46} $ml={2} $color={g} $ls={0}>CCW 90°</Label>
      <Cell $w={14} $ml={2}><Turn flip /></Cell><Label $w={38} $ml={3} $color={g}>CW 90°</Label>
      <Cell $w={14} $ml={3}><Best /></Cell><Label $w={86} $ml={3} $color={g} $ls={0.05}>Rotate to best(Q)</Label>
      <Cell $w={14} $ml={3}><MirrorIco /></Cell><Label $w={28} $ml={2} $color={g}>Mirror</Label>
      <Cell $w={14} $ml={4}><ResetIco /></Cell><Label $w={28} $ml={2} $color={g}>Reset</Label>
      <Cell $w={9} $ml={3}><Svg w={7} h={12}><path d="M.5.500L3 3 .5 5.500M4 .5L6.500 3 4 5.500" stroke="#111" strokeWidth="1.300" /><path d="M1 9h5L3.500 12z" fill="#111" /></Svg></Cell>
    </ToolStrip>
  );
}

const Lower = styled.div`flex: none; height: 119px; padding-top: 2px; display: flex; gap: 6px;`;
const Pane = styled.div`flex: none; width: ${p => p.$w}px; display: flex; flex-direction: column;`;
const TabBar = styled.div`
  flex: none; height: 18px; display: flex; align-items: flex-end; background: #fdfdfd; border-bottom: 1px solid #8d9194; padding-left: ${p => p.$pl}px;
`;
const Tab = styled.div`
  flex: none; width: ${p => p.$w}px; height: 15px; display: flex; align-items: center; padding-left: 2px; color: #1b2430;
  ${p => (p.$on ? css`background: #9fc6ea; border: 1px solid #6c8fae; border-bottom: 0;` : css`border-right: 1px solid #8d9194; height: 11px; margin-bottom: 2px;`)}
`;
const PaneBody = styled.div`
  flex: 1; margin-top: 2px; background: #fff; border: 1px solid #8d9194; border-top-width: ${p => p.$t || 1}px; border-bottom-color: #ccc; display: flex; flex-direction: column; align-items: ${p => (p.$mid ? 'center' : 'flex-start')}; padding: ${p => p.$pad};
`;
const HScroll = styled.div`flex: 1; height: 17px; margin-left: 99px; background: #f1f1f1; display: flex; justify-content: space-between; align-items: center; padding: 0 4px 3px 4px;`;

function LowerArea() {
  return (
    <Lower>
      <Pane $w={277}>
        <TabBar $pl={9}><Tab $on $w={68}><Label $size={9.5} $ls={-0.3}>Assembly Parts</Label></Tab></TabBar>
        <PaneBody $mid $t={2} $pad="40px 0 0 0"><Label $color="#2418cc" $size={9.5} $ls={-0.33}>Select parts and right click to set them as Assembly Parts</Label></PaneBody>
      </Pane>
      <Pane $w={548}>
        <TabBar $pl={9}>
          <Tab $on $w={42}><Svg w={14} h={12}><path d="M1 0v10h10z" fill="#3a68c6" /><path d="M13 1L5 9l-2 1" stroke="#d09a35" strokeWidth="2" /><path d="M3 11h10" stroke="#b8862c" strokeWidth="2" /></Svg><Label $size={9.5} $ls={0}>Draw</Label></Tab>
          <Tab $w={51}><Svg w={16} h={12}><path d="M3 2h6l2 2v8H3z" fill="#eef6fd" stroke="#2b83d4" /><path d="M6 0h4l4 3-3 2-4-1z" fill="#2d92e6" /></Svg><Label $size={9.5} $ls={-0.4}>System</Label></Tab>
          <HScroll><Svg w={5} h={8}><path d="M5 0v8L0 4z" fill="#9a9a9a" /></Svg><Svg w={5} h={8}><path d="M0 0v8l5-4z" fill="#9a9a9a" /></Svg></HScroll>
        </TabBar>
        <PaneBody $pad="17px 0 0 1px">
          {['Command: Import Parts', 'Command: mport parts', 'Command: Modify Nested Number'].map(t => <Line key={t} $h={12.6}><Label $color="#1b1b1b" $size={10} $ls={0}>{t}</Label></Line>)}
        </PaneBody>
      </Pane>
    </Lower>
  );
}

/* ---------- nest panel ---------- */

const NestItem = styled.div`height: 68px; margin: 0 1px; background: #a6c9ee; display: flex; color: #6b7785;`;
const NestLine = styled.div`border-top: 1px solid #8f9396; border-left: 1px solid #8f9396; flex: 1; display: flex; flex-direction: column;`;
const NestInfo = styled.div`width: 118px; padding: 3px 0 0 2px; display: flex; flex-direction: column;`;
const NestIcons = styled.div`flex: 1; display: flex; flex-direction: column; align-items: flex-end; gap: 5px; padding: 2px 7px 0 0;`;
const Spacer = styled.i`display: block; height: ${p => p.$h}px;`;
const NestThumb = styled.div`padding: 18px 0 0 7px;`;
const PullTab = styled.i`
  display: block; width: 8px; height: 28px; margin: 352px 0 0 auto; background: #2c2e31; border-radius: 4px 0 0 4px;
`;

function NestPanel() {
  return (
    <Side $w={234}>
      <SideTitle $pr={2}><Label $size={9.5} $ls={-0.19}>Nest(1,Selected:0,All:1)</Label></SideTitle>
      <SideTools>
        <Cell $w={28}><Plus /></Cell><Cell $w={14}><CaretShape $c="#222" /></Cell>
        <Cell $w={28}><Minus c="#b5b5b5" s="#a5a5a5" /></Cell><Cell $w={12}><CaretShape $c="#aaa" /></Cell>
        <Cell $w={25} $ml={12}><Checks /></Cell><Cell $w={17}><CaretShape $c="#222" /></Cell>
        <Cell $w={25}><SortList up /></Cell><Cell $w={16}><CaretShape $c="#222" /></Cell>
        <Cell $w={27}><BigFloppy /></Cell><Cell $w={14}><CaretShape $c="#aaa" /></Cell>
      </SideTools>
      <NestLine>
        <NestItem>
          <BoxShape $clear $mt={23} />
          <NestThumb><Svg w={50} h={25}><rect x=".8" y=".8" width="48" height="23" stroke="#1d3a5c" strokeWidth="1.300" strokeDasharray="7 2 2 2" /></Svg></NestThumb>
          <NestInfo>
            <Label $bold $ls={-0.3}>Result1</Label><Spacer $h={6} /><Label $ls={-0.07}>47.240x94.490</Label><Spacer $h={2} /><Label $ml={72} $ls={-0.1}>Amount:1</Label>
          </NestInfo>
          <NestIcons>
            <Svg w={12} h={12}><path d="M1 6v5h10V6M6 1L2.500 5H4.500v3h3V5H9.500z" stroke="#fff" /></Svg>
            <Svg w={12} h={12}><rect x="1" y="1" width="10" height="10" stroke="#fff" /><path d="M9 3H3.500v3H7v3h2M3 9h2" stroke="#fff" /></Svg>
          </NestIcons>
        </NestItem>
        <PullTab />
      </NestLine>
    </Side>
  );
}

/* ---------- status bar and taskbar ---------- */

const Status = styled.footer`
  flex: none; height: 20px; display: flex; align-items: center; background: linear-gradient(#dde3e5, #c3cacd); color: #2c3138;
`;
const Taskbar = styled.nav`flex: none; height: 40px; display: flex; align-items: center; background: linear-gradient(90deg, #d5dff3, #d9e3f5);`;
const Slot = styled.div`
  flex: none; position: relative; width: 32px; height: 33px; margin-left: ${p => p.$ml || 0}px; display: flex; align-items: center; justify-content: center; border-radius: 3px; background: ${p => (p.$on ? '#f3f7fd' : 'transparent')};
`;
const Mark = styled.i`position: absolute; bottom: 0; width: ${p => p.$w}px; height: 2px; border-radius: 1px; background: ${p => p.$c};`;
const Clock = styled.div`width: 46px; margin-left: 6px; text-align: right; font: 10.5px/13px 'Noto Sans', sans-serif; color: #222; letter-spacing: -0.4px; white-space: nowrap;`;
const Badge = styled.span`width: 13px; height: 13px; margin-left: 6px; border-radius: 50%; background: #0a74cc; color: #fff; font: 9px/13px 'Noto Sans', sans-serif; text-align: center;`;
const Ime = styled.span`font: 13px/14px 'Noto Sans CJK SC', sans-serif; color: #555;`;

function Bars() {
  return (
    <>
      <Status>
        <Rule $h={17} $ml={1086} $c="#9aa2a6" />
        <Label $ml={18} $w={68} $size={9.5} $ls={0}>-2.84, -4.03</Label>
        <Rule $h={17} $c="#9aa2a6" />
        <Label $ml={6} $w={46} $color="#5c6878" $ls={-0.15}>Fine-tune</Label>
        <Combo $w={52} $ml={1} $h={17}><Label $w={34} $ls={-0.1}>0.0394</Label><CaretShape $ml={5} /></Combo>
      </Status>
      <Taskbar>
        <Slot $ml={12}><Svg w={20} h={20}><path d="M0 0h9.500v9.500H0zM10.500 0H20v9.500h-9.500zM0 10.500h9.500V20H0z" fill="#23a6ea" /><path d="M10.500 10.500H20V20h-9.500z" fill="#0b7dd6" /></Svg></Slot>
        <Slot $ml={5}><Svg w={18} h={18}><circle cx="10.500" cy="7.500" r="6.500" stroke="#222" strokeWidth="2" /><path d="M6 12L1 17.500" stroke="#222" strokeWidth="2.500" /></Svg></Slot>
        <Slot $ml={4}><Svg w={20} h={18}><path d="M6 0h14v13H6z" fill="#f7f5f4" /><path d="M1 5h15v13H1z" fill="#2c2f31" /><path d="M6 5h10v8H6z" fill="#bdb9b8" /></Svg></Slot>
        <Slot $ml={5}><Svg w={20} h={18}><rect x="1" y="1" width="18" height="16" fill="#fff" stroke="#1866a8" strokeWidth="2" /><path d="M10 2h8v8h-8z" fill="#4cc3f5" /><path d="M10 11h8v5h-8z" fill="#1b84d6" /><path d="M9.500 1v16" stroke="#1866a8" strokeWidth="1.500" /></Svg></Slot>
        <Slot $ml={5}><Svg w={20} h={18}><path d="M0 0h8l2 2h10v16H0z" fill="#e0a92c" /><path d="M0 4h20v14H0z" fill="#fbd355" /><path d="M3 17v-3l2-1h10l2 1v4H3z" fill="#1e72b8" /></Svg></Slot>
        <Slot $ml={4}><Svg w={20} h={20}><circle cx="10" cy="10" r="10" fill="#1474c4" /><path d="M0 9C1 2 8-1 14 1c5 1.500 7 7 5 10-1.500 2-6 2-6.500 0 .5-3-2-4.500-5-4C4 7 1 7 0 9z" fill="#35c4d4" /><path d="M12 .3c6 1 9 7 7 10.700-1.500 2-6 2-6.500 0C13 6 11 4 12 .3z" fill="#5cd672" /><path d="M8.500 8c-2 4 2 9 9 7-3 5-12 6-13-1-.5-4 1.500-6 4-6z" fill="#0c4f9c" /><path d="M9 9c-1 4 4 6 9 4.500" stroke="#d9e8f8" strokeWidth="1.500" /></Svg><Mark $w={5} $c="#7d8087" /></Slot>
        <Slot $ml={5} $on><Logo s={18} /><Mark $w={13} $c="#1a69ad" /></Slot>
        <Cell $w={20} $ml={695}><Svg w={10} h={6}><path d="M.5 5.500L5 .8l4.500 4.700" stroke="#222" strokeWidth="1.300" /></Svg></Cell>
        <Cell $w={20}><Svg w={13} h={13}><rect width="13" height="13" fill="#fff" /><circle cx="6" cy="6" r="4" stroke="#5aa6e3" strokeWidth="1.300" /><path d="M9 9l2 2" stroke="#e0b24a" strokeWidth="1.500" /></Svg></Cell>
        <Cell $w={20}><Svg w={13} h={13}><circle cx="6.500" cy="6.500" r="6.500" fill="#d6242b" /><path d="M2.500 7L10 3 8 10.500 6 8z" fill="#fff" /></Svg></Cell>
        <Cell $w={20}><Svg w={14} h={14}><path d="M0 2l7-2 7 2v10l-6 2-8-2z" fill="#a3161c" /><path d="M0 2l7-2 7 2-6 2z" fill="#d64b4f" /><path d="M5.500 6.500H2.500v2h3v2.500h-3.500M9 6v5m0-5h3v5H9" stroke="#f3dede" /></Svg></Cell>
        <Cell $w={27}><Svg w={9} h={14}><rect x="2.500" y=".5" width="4" height="8" rx="2" fill="#8fc0ee" stroke="#2c62a6" /><path d="M.5 6c0 6 8 6 8 0M4.500 10.500V14" stroke="#2c4d7d" /></Svg></Cell>
        <Cell $w={26}><Ime>英</Ime></Cell>
        <Cell $w={38}><Svg w={13} h={12}><path d="M0 1l12-1 1 10.500L1 12z" fill="#f0642a" /><path d="M9.500 3C5 2 3 4 4.500 5.500S9 6 9 7.500C9 9 6 9.500 3 8.500" stroke="#fff" strokeWidth="1.500" /></Svg></Cell>
        <Cell $w={20} $ml={2}><Svg w={14} h={11}><path d="M.5 4c4-4 9-4 13 0M2.500 6c3-2.700 6-2.700 9 0M4.500 8c1.700-1.500 3.300-1.500 5 0" stroke="#222" strokeWidth="1.200" /><circle cx="7" cy="9.500" r="1.200" fill="#222" /></Svg></Cell>
        <Cell $w={19}><Svg w={12} h={11}><path d="M.5 4h2L6 1v9L2.500 7.500h-2z" stroke="#222" /><path d="M8 3.500c1 1 1 3 0 4M9.500 2c2 2 2 5 0 7" stroke="#222" /></Svg></Cell>
        <Cell $w={22}><Svg w={13} h={11}><rect x="3" y="3" width="9" height="7" rx="1" fill="#222" /><path d="M12.500 5v3M1.500 0v3M4 0v3" stroke="#222" /><path d="M0 2h5v3H3v2H2V5H0z" fill="#222" /></Svg></Cell>
        <Clock>16:05<br />2022/7/5</Clock>
        <Badge>3</Badge>
      </Taskbar>
    </>
  );
}

export default function App() {
  return (
    <Window>
      <Global />
      <Title />
      <Ribbon />
      <Main>
        <PartsPanel />
        <Gutter $w={4} $b={1} />
        <Center>
          <View>
            <Drawing />
            <VScroll><Svg w={8} h={5}><path d="M4 0l4 5H0z" fill="#a3a3a3" /></Svg><Svg w={8} h={5}><path d="M4 5l4-5H0z" fill="#a3a3a3" /></Svg></VScroll>
          </View>
          <BottomTools />
          <LowerArea />
        </Center>
        <Gutter $w={1} $c="#9da1a5" />
        <NestPanel />
      </Main>
      <Bars />
    </Window>
  );
}
